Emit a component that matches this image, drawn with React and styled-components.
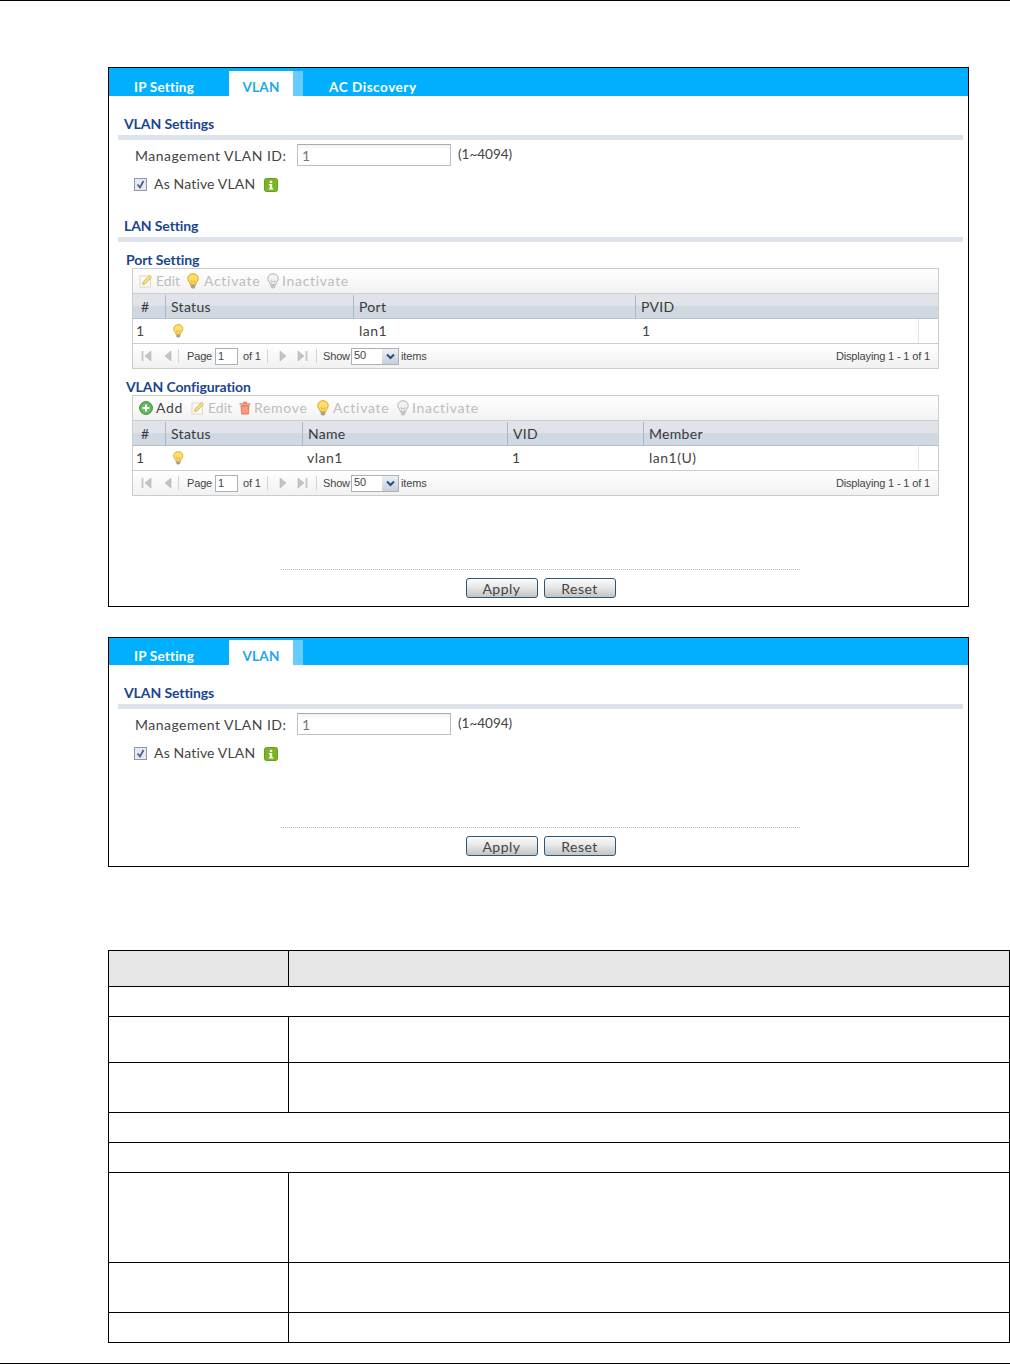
import React from 'react'
import styled, { createGlobalStyle } from 'styled-components'

const GlobalStyle = createGlobalStyle`
  html, body { margin: 0; padding: 0; background: #fff; }
  body { font-family: "Lato", "Open Sans", sans-serif; color: #333; }
`

const Page = styled.div`
  width: 1010px;
  height: 1364px;
  box-sizing: border-box;
  border-top: 1px solid #000;
  border-bottom: 1px solid #000;
  padding: 66px 0 0 108px;
  overflow: hidden;
`

const Panel = styled.section`
  width: 861px;
  height: ${p => p.$height}px;
  box-sizing: border-box;
  border: 1px solid #000;
  margin-bottom: 30px;
`

const TabBar = styled.div`
  height: ${p => p.$height}px;
  background: #00b0ff;
  display: flex;
  align-items: flex-end;
  padding-left: 25px;
`

const Tab = styled.div`
  height: 25px;
  box-sizing: border-box;
  font-size: 13.5px;
  font-weight: 700;
  line-height: 32px;
  letter-spacing: ${p => p.$spacing ?? 0.2}px;
  white-space: nowrap;
  color: ${p => (p.$active ? '#1ea7ee' : '#fff')};
  background: ${p => (p.$active ? '#fff' : 'transparent')};
  width: ${p => p.$width}px;
  margin-left: ${p => p.$left || 0}px;
  text-align: ${p => (p.$active ? 'center' : 'left')};
`

const TabEdge = styled.div`
  width: 10px;
  height: 25px;
  background: #66ccff;
`

const Body = styled.div`
  padding: 0 5px 0 9px;
`

const SectionTitle = styled.h2`
  margin: ${p => p.$top}px 0 0 ${p => p.$left || 6}px;
  font-size: 14px;
  line-height: 16px;
  font-weight: 700;
  letter-spacing: -0.1px;
  color: #1b4591;
`

const Rule = styled.div`
  height: 5px;
  margin-top: 3px;
  background: #dde3ea;
`

const FormRow = styled.div`
  display: flex;
  align-items: center;
  height: 22px;
  margin-top: 4px;
  padding-left: 17px;
  font-size: 14px;
  letter-spacing: 0.48px;
  color: #444;
`

const FieldLabel = styled.label`
  width: 162px;
  white-space: nowrap;
`

const TextBox = styled.div`
  width: 154px;
  height: 22px;
  box-sizing: border-box;
  border: 1px solid #b9c0c8;
  border-top-color: #a3abb5;
  padding-left: 4px;
  line-height: 22px;
  color: #777;
  background: linear-gradient(#f3f3f3, #fff 5px);
`

const Hint = styled.span`
  margin: -2px 0 0 7px;
  font-size: 13.5px;
  letter-spacing: 0;
`

const CheckRow = styled.div`
  display: flex;
  align-items: center;
  height: 14px;
  margin-top: 12px;
  padding-left: 16px;
  font-size: 14px;
  letter-spacing: 0.15px;
  color: #444;
`

const CheckLabel = styled.span`
  margin-top: -3px;
  white-space: nowrap;
`

const CheckBox = styled.span`
  width: 13px;
  height: 13px;
  box-sizing: border-box;
  border: 1px solid #8d9aa6;
  background: #e6e9ef;
  margin: -1px 7px 0 0;
  display: flex;
`

const InfoBadge = styled.span`
  width: 14px;
  height: 14px;
  margin-left: 9px;
  display: flex;
`

const GridBox = styled.div`
  width: 807px;
  margin-left: 14px;
  box-sizing: border-box;
  border: 1px solid #ccc;
`

const Toolbar = styled.div`
  height: 24px;
  box-sizing: border-box;
  padding: 0 0 1px 6px;
  display: flex;
  align-items: center;
  background: linear-gradient(#fff, #f2f2f2);
  font-size: 14px;
`

const ToolButton = styled.span`
  display: flex;
  align-items: center;
  gap: ${p => p.$gap ?? 3}px;
  width: ${p => p.$width}px;
  white-space: nowrap;
  letter-spacing: ${p => p.$spacing ?? 0.7}px;
  color: ${p => (p.$enabled ? '#444' : '#bdbdbd')};
`

const GridHeader = styled.div`
  display: grid;
  grid-template-columns: ${p => p.$cols};
  height: 26px;
  box-sizing: border-box;
  border-top: 1px solid #c9ced5;
  border-bottom: 1px solid #b7c1cd;
  background: linear-gradient(#e0e4e9 50%, #d0d8e2 50%);
  font-size: 14px;
  letter-spacing: 0.3px;
  color: #3a3a3a;
`

const HeaderCell = styled.div`
  padding-left: ${p => p.$pad ?? 5}px;
  border-left: ${p => (p.$first ? '0' : '1px solid #a9b7c8')};
  margin: 1px 0;
  line-height: 24px;
`

const GridRow = styled.div`
  display: grid;
  grid-template-columns: ${p => p.$cols} 20px;
  height: 24px;
  font-size: 14px;
  letter-spacing: 0.5px;
  line-height: 24px;
  color: #444;
`

const RowCell = styled.div`
  padding-left: ${p => p.$pad ?? 6}px;
  display: flex;
  align-items: center;
`

const RowFiller = styled.div`
  border-left: 1px solid #e4e4e4;
`

const Pager = styled.div`
  height: 25px;
  box-sizing: border-box;
  border-top: 1px solid #ccc;
  padding: 0 8px;
  display: flex;
  align-items: center;
  background: linear-gradient(#fff, #f1f1f1);
  font-family: "Liberation Sans", Arial, sans-serif;
  font-size: 11px;
  letter-spacing: -0.15px;
  color: #444;
`

const PagerSlot = styled.span`
  width: ${p => p.$width}px;
  flex: none;
  display: flex;
  align-items: center;
  white-space: nowrap;
`

const PagerDivider = styled.span`
  width: 1px;
  height: 14px;
  flex: none;
  background: #d5d5d5;
  margin: 0 ${p => p.$right ?? 8}px 0 ${p => p.$left ?? 0}px;
`

const PageInput = styled.span`
  width: 23px;
  height: 17px;
  box-sizing: border-box;
  flex: none;
  border: 1px solid #a9b1ba;
  background: #fff;
  padding-left: 2px;
  line-height: 15px;
  margin-right: 5px;
`

const SizeSelect = styled.span`
  width: 48px;
  height: 17px;
  box-sizing: border-box;
  flex: none;
  border: 1px solid #a9b1ba;
  background: #fff;
  padding-left: 2px;
  display: flex;
  justify-content: space-between;
  line-height: 13px;
  margin-right: 2px;
`

const SelectArrow = styled.span`
  width: 16px;
  background: linear-gradient(#eef0f3, #c9ced6);
  display: flex;
  align-items: center;
  justify-content: center;
`

const PagerInfo = styled.span`
  margin-left: auto;
`

const Footer = styled.div`
  width: 519px;
  margin: ${p => p.$top}px 0 0 163px;
  border-top: 1px dotted #b5b5b5;
  padding-top: 8px;
  display: flex;
  justify-content: center;
  gap: 6px;
`

const ActionButton = styled.button`
  width: 72px;
  height: 20px;
  padding: 1px 0 0;
  box-sizing: border-box;
  border: 1px solid #2b587a;
  border-radius: 3px;
  background: linear-gradient(#fbfbfb, #e8e8e8 45%, #c4c4c4);
  font-family: inherit;
  font-size: 14px;
  letter-spacing: 0.5px;
  line-height: 18px;
  color: #444;
`

const SpecTable = styled.table`
  width: 902px;
  margin-top: 83px;
  table-layout: fixed;
  border-collapse: collapse;
  td { border: 1px solid #000; padding: 0; }
`

const HeadCell = styled.td`
  background: #e6e6e6;
`

const Bulb = ({ off, size = 16 }) => (
  <svg width={(size * 3) / 4} height={size} viewBox="0 0 12 16">
    <path
      d="M6 .7C2.9.7.8 2.9.8 5.5c0 2.1 1.300 3.200 2 4.500.3.600.4 1.100.4 1.700h5.600c0-.6.100-1.100.4-1.700.7-1.300 2-2.400 2-4.500C11.200 2.900 9.100.7 6 .7z"
      fill={off ? '#f2f2f2' : '#ffdf6a'}
      stroke={off ? '#b5b5b5' : '#d9a520'}
    />
    <path d="M3.700 12h4.600v2.200L7 15.400H5l-1.300-1.200z" fill={off ? '#c4c4c4' : '#a8a08c'} />
    <path d="M4.300 8.500h3.400M4.800 10.500 4 6.800M7.200 10.500 8 6.800" stroke={off ? '#c4c4c4' : '#f0b92c'} fill="none" />
  </svg>
)

const EditIcon = () => (
  <svg width="14" height="14" viewBox="0 0 14 14">
    <rect x="1" y="2" width="10.500" height="11" fill="#fbfbf6" stroke="#d8d8c8" />
    <path d="M3.500 10.500 4 8l6.500-6.700 2 2L6 10z" fill="#f3dd8c" stroke="#e2bd52" />
  </svg>
)

const AddIcon = () => (
  <svg width="14" height="14" viewBox="0 0 14 14">
    <circle cx="7" cy="7" r="6.400" fill="#63b95c" stroke="#3f8f3d" />
    <path d="M7 3.500v7M3.500 7h7" stroke="#fff" strokeWidth="2" />
  </svg>
)

const TrashIcon = () => (
  <svg width="12" height="14" viewBox="0 0 12 14">
    <path d="M4 1.500h4M.5 3h11" stroke="#e88a72" strokeWidth="1.500" />
    <path d="M1.500 4h9l-.7 9.500H2.200z" fill="#ef8064" />
    <path d="M4 5.500v6.500M6 5.500v6.500M8 5.500v6.500" stroke="#f8b7a6" />
  </svg>
)

const PagerIcon = ({ kind }) => {
  const flip = kind === 'next' || kind === 'last'
  const edge = kind === 'first' || kind === 'last'
  return (
    <svg width="11" height="12" viewBox="0 0 11 12" style={flip ? { transform: 'scaleX(-1)' } : undefined}>
      {edge && <rect x="0.500" y="1" width="2" height="10" fill="#c9c9c9" />}
      <path d={edge ? 'M10 1v10L4 6z' : 'M8 1v10L2 6z'} fill="#c4c4c4" stroke="#aaa" strokeWidth="0.500" />
    </svg>
  )
}

const CheckMark = () => (
  <svg width="11" height="11" viewBox="0 0 11 11">
    <path d="M2.500 5.500 5 8.500 8.500 2" fill="none" stroke="#4c5f94" strokeWidth="1.800" />
  </svg>
)

const InfoIcon = () => (
  <svg width="14" height="14" viewBox="0 0 14 14">
    <rect x="0.500" y="0.500" width="13" height="13" rx="2" fill="#7cb423" stroke="#6a9c1d" />
    <rect x="5.800" y="2.800" width="2.400" height="2.200" fill="#fff" />
    <path d="M4.800 6h3.400v4.200h1v1.200H4.800v-1.200h1V7.200h-1z" fill="#fff" />
  </svg>
)

const Pagination = () => (
  <Pager>
    <PagerSlot $width={22}><PagerIcon kind="first" /></PagerSlot>
    <PagerSlot $width={15}><PagerIcon kind="prev" /></PagerSlot>
    <PagerDivider />
    <PagerSlot $width={28}>Page</PagerSlot>
    <PageInput>1</PageInput>
    <PagerSlot $width={18}>of 1</PagerSlot>
    <PagerDivider $left={6} $right={9} />
    <PagerSlot $width={20}><PagerIcon kind="next" /></PagerSlot>
    <PagerSlot $width={19}><PagerIcon kind="last" /></PagerSlot>
    <PagerDivider $left={0} $right={6} />
    <PagerSlot $width={28}>Show</PagerSlot>
    <SizeSelect>
      50
      <SelectArrow>
        <svg width="9" height="7" viewBox="0 0 9 7">
          <path d="M1 1.500 4.500 5 8 1.500" fill="none" stroke="#1f4f8a" strokeWidth="2" />
        </svg>
      </SelectArrow>
    </SizeSelect>
    <PagerSlot $width={30}>items</PagerSlot>
    <PagerInfo>Displaying 1 - 1 of 1</PagerInfo>
  </Pager>
)

const VlanFields = () => (
  <>
    <FormRow>
      <FieldLabel>Management VLAN ID:</FieldLabel>
      <TextBox>1</TextBox>
      <Hint>(1~4094)</Hint>
    </FormRow>
    <CheckRow>
      <CheckBox><CheckMark /></CheckBox>
      <CheckLabel>As Native VLAN</CheckLabel>
      <InfoBadge><InfoIcon /></InfoBadge>
    </CheckRow>
  </>
)

const portCols = '32px 188px 282px 1fr'
const vlanCols = '32px 137px 205px 136px 1fr'

const specRows = [
  { h: 30, span: true },
  { h: 46 },
  { h: 50 },
  { h: 30, span: true },
  { h: 30, span: true },
  { h: 90 },
  { h: 50 },
  { h: 30 },
]

export default function App() {
  return (
    <>
      <GlobalStyle />
      <Page>
        <Panel $height={540}>
          <TabBar $height={28}>
            <Tab $width={95}>IP Setting</Tab>
            <Tab $active $width={64}>VLAN</Tab>
            <TabEdge />
            <Tab $width={110} $left={26} $spacing={0.55}>AC Discovery</Tab>
          </TabBar>
          <Body>
            <SectionTitle $top={20}>VLAN Settings</SectionTitle>
            <Rule />
            <VlanFields />
            <SectionTitle $top={26}>LAN Setting</SectionTitle>
            <Rule />
            <SectionTitle $top={10} $left={8}>Port Setting</SectionTitle>
            <GridBox>
              <Toolbar>
                <ToolButton $width={48} $spacing={0}><EditIcon />Edit</ToolButton>
                <ToolButton $width={80} $gap={5}><Bulb />Activate</ToolButton>
                <ToolButton $width={90}><Bulb off />Inactivate</ToolButton>
              </Toolbar>
              <GridHeader $cols={portCols}>
                <HeaderCell $first $pad={8}>#</HeaderCell>
                <HeaderCell>Status</HeaderCell>
                <HeaderCell>Port</HeaderCell>
                <HeaderCell>PVID</HeaderCell>
              </GridHeader>
              <GridRow $cols={portCols}>
                <RowCell $pad={3}>1</RowCell>
                <RowCell $pad={8}><Bulb size={14} /></RowCell>
                <RowCell>lan1</RowCell>
                <RowCell $pad={7}>1</RowCell>
                <RowFiller />
              </GridRow>
              <Pagination />
            </GridBox>
            <SectionTitle $top={10} $left={8}>VLAN Configuration</SectionTitle>
            <GridBox>
              <Toolbar>
                <ToolButton $width={52} $enabled><AddIcon />Add</ToolButton>
                <ToolButton $width={48} $spacing={0}><EditIcon />Edit</ToolButton>
                <ToolButton $width={78}><TrashIcon />Remove</ToolButton>
                <ToolButton $width={80} $gap={4}><Bulb />Activate</ToolButton>
                <ToolButton $width={90}><Bulb off />Inactivate</ToolButton>
              </Toolbar>
              <GridHeader $cols={vlanCols}>
                <HeaderCell $first $pad={8}>#</HeaderCell>
                <HeaderCell>Status</HeaderCell>
                <HeaderCell>Name</HeaderCell>
                <HeaderCell>VID</HeaderCell>
                <HeaderCell>Member</HeaderCell>
              </GridHeader>
              <GridRow $cols={vlanCols}>
                <RowCell $pad={3}>1</RowCell>
                <RowCell $pad={8}><Bulb size={14} /></RowCell>
                <RowCell $pad={5}>vlan1</RowCell>
                <RowCell $pad={5}>1</RowCell>
                <RowCell>lan1(U)</RowCell>
                <RowFiller />
              </GridRow>
              <Pagination />
            </GridBox>
            <Footer $top={73}>
              <ActionButton>Apply</ActionButton>
              <ActionButton>Reset</ActionButton>
            </Footer>
          </Body>
        </Panel>
        <Panel $height={230}>
          <TabBar $height={27}>
            <Tab $width={95}>IP Setting</Tab>
            <Tab $active $width={64}>VLAN</Tab>
            <TabEdge />
          </TabBar>
          <Body>
            <SectionTitle $top={20}>VLAN Settings</SectionTitle>
            <Rule />
            <VlanFields />
            <Footer $top={66}>
              <ActionButton>Apply</ActionButton>
              <ActionButton>Reset</ActionButton>
            </Footer>
          </Body>
        </Panel>
        <SpecTable>
          <colgroup>
            <col style={{ width: 180 }} />
            <col />
          </colgroup>
          <tbody>
            <tr style={{ height: 36 }}>
              <HeadCell />
              <HeadCell />
            </tr>
            {specRows.map((row, i) => (
              <tr key={i} style={{ height: row.h }}>
                {row.span ? <td colSpan={2} /> : (
                  <>
                    <td />
                    <td />
                  </>
                )}
              </tr>
            ))}
          </tbody>
        </SpecTable>
      </Page>
    </>
  )
}
